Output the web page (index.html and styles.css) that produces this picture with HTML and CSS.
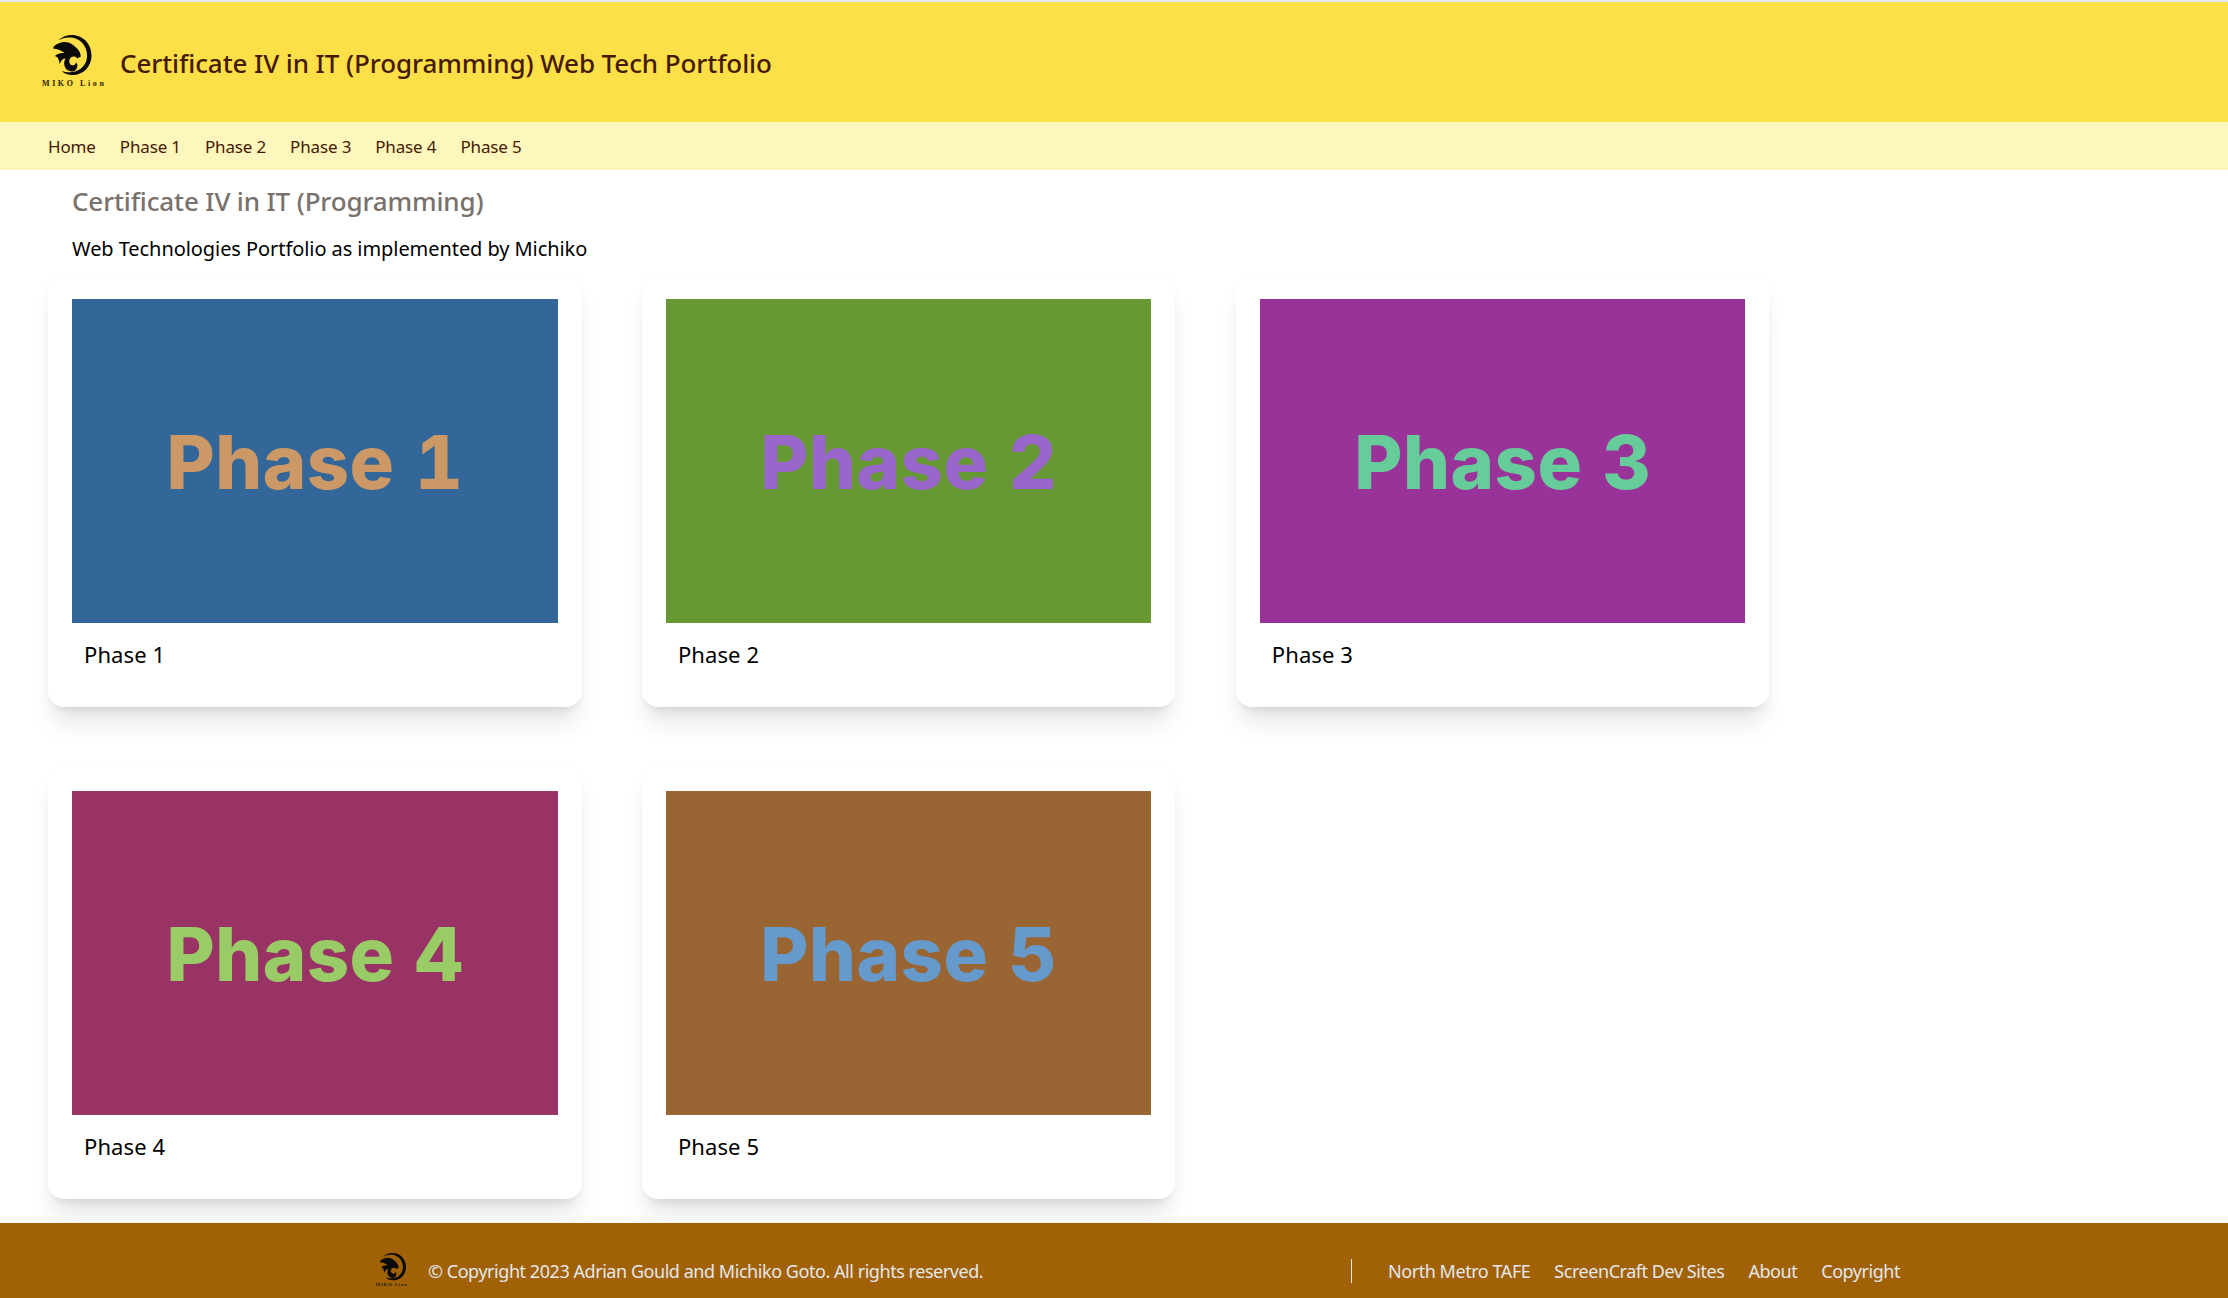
FILE: index.html
```html
<!DOCTYPE html>
<html lang="en">
<head>
<meta charset="utf-8">
<title>Certificate IV in IT (Programming) Web Tech Portfolio</title>
<link rel="stylesheet" href="styles.css">
</head>
<body>
<header class="site-header">
  <div class="logo">
    <svg class="logo-mark" viewBox="0 0 42 42" aria-hidden="true">
      <path fill="#0a0a0a" d="M8 5.5C12 1.5 17 0 22 0C33 0 42 9 42 21C42 33 33 41 23 41C17.5 41 14 39.5 11.5 36.5C14.5 38 18 38.5 22 38C31 37 37.500 30 37.500 21C37.500 11 30 3 21 2.500C16 2.200 11.500 3.300 8 5.500Z"/>
      <path fill="#0a0a0a" d="M3 12C9 6.500 17 6 22 9.500C27 13 31 17 31 22L27.500 24C25 21 21 21.500 19.500 25C18.500 28.500 20.500 31 23 31C25 31 26.200 29.500 26 28C28.500 30 28 34.500 24.500 37C19 38.500 14 35 14 29C14 27 14.500 25.500 15.500 24C12.500 24 10.500 26 9.500 30C8.500 25 8 22.500 4.500 21.500C7 19 10.500 18 14.500 18.500C11 15.500 6.500 14 3 14Z"/>
    </svg>
    <span class="logo-text">MIKO Lion</span>
  </div>
  <h1 class="site-title">Certificate IV in IT (Programming) Web Tech Portfolio</h1>
</header>
<nav class="sub-nav">
  <a href="#">Home</a><a href="#">Phase 1</a><a href="#">Phase 2</a><a href="#">Phase 3</a><a href="#">Phase 4</a><a href="#">Phase 5</a>
</nav>
<main class="content">
  <div class="intro">
    <h2 class="intro-title">Certificate IV in IT (Programming)</h2>
    <p class="intro-text">Web Technologies Portfolio as implemented by Michiko</p>
  </div>
  <section class="card-grid">
    <article class="card"><div class="thumb thumb-1">Phase 1</div><p class="card-label">Phase 1</p></article>
    <article class="card"><div class="thumb thumb-2">Phase 2</div><p class="card-label">Phase 2</p></article>
    <article class="card"><div class="thumb thumb-3">Phase 3</div><p class="card-label">Phase 3</p></article>
    <article class="card"><div class="thumb thumb-4">Phase 4</div><p class="card-label">Phase 4</p></article>
    <article class="card"><div class="thumb thumb-5">Phase 5</div><p class="card-label">Phase 5</p></article>
  </section>
</main>
<footer class="site-footer">
  <div class="footer-left">
    <div class="footer-logo">
      <svg class="footer-mark" viewBox="0 0 42 42" aria-hidden="true">
        <path fill="#0a0a0a" d="M8 5.5C12 1.5 17 0 22 0C33 0 42 9 42 21C42 33 33 41 23 41C17.5 41 14 39.5 11.5 36.5C14.5 38 18 38.5 22 38C31 37 37.500 30 37.500 21C37.500 11 30 3 21 2.500C16 2.200 11.500 3.300 8 5.500Z"/>
        <path fill="#0a0a0a" d="M3 12C9 6.500 17 6 22 9.500C27 13 31 17 31 22L27.500 24C25 21 21 21.500 19.500 25C18.500 28.500 20.500 31 23 31C25 31 26.200 29.500 26 28C28.500 30 28 34.500 24.500 37C19 38.500 14 35 14 29C14 27 14.500 25.500 15.500 24C12.500 24 10.500 26 9.500 30C8.500 25 8 22.500 4.500 21.500C7 19 10.500 18 14.500 18.500C11 15.500 6.500 14 3 14Z"/>
      </svg>
      <span class="footer-logo-text">MIKO Lion</span>
    </div>
    <p class="copyright">© Copyright 2023 Adrian Gould and Michiko Goto. All rights reserved.</p>
  </div>
  <nav class="footer-nav">
    <a href="#">North Metro TAFE</a><a href="#">ScreenCraft Dev Sites</a><a href="#">About</a><a href="#">Copyright</a>
  </nav>
</footer>
</body>
</html>
```
FILE: styles.css
```css
* { box-sizing: border-box; }
html, body { margin: 0; padding: 0; }
body {
  height: 1298px;
  overflow: hidden;
  background: #fff;
  color: #000;
  font-family: "Noto Sans", "Open Sans", sans-serif;
  border-top: 2px solid #e5e7eb;
}
a { color: inherit; text-decoration: none; }
h1, h2, p { margin: 0; }

.site-header {
  height: 120px;
  background: #fde047;
  display: flex;
  align-items: center;
  padding-left: 42px;
  gap: 16px;
}
.logo { width: 62px; display: flex; flex-direction: column; align-items: flex-start; margin-bottom: 1px; }
.logo-mark { width: 42px; height: 41px; display: block; margin-left: 8px; }
.logo-text { font: 700 8px/9px "Liberation Serif", serif; letter-spacing: 2.6px; color: #2a2208; margin-top: 3px; white-space: nowrap; }
.site-title { font-size: 26px; font-weight: 500; color: #451a03; line-height: 36px; letter-spacing: -0.08px; padding-top: 1px; }

.sub-nav {
  height: 48px;
  background: #fef7bd;
  display: flex;
  align-items: center;
  gap: 24px;
  padding-left: 48px;
  font-size: 17px;
  color: #451a03;
  letter-spacing: -0.15px;
}

.content { padding: 0 48px; height: 1053px; }
.intro { padding-left: 24px; }
.intro-title { font-size: 26px; font-weight: 500; line-height: 36px; padding-top: 13px; color: #78716c; letter-spacing: -0.14px; }
.intro-text { font-size: 20px; line-height: 28px; margin-top: 16px; letter-spacing: -0.07px; }

.card-grid {
  display: grid;
  grid-template-columns: repeat(3, 533.6px);
  grid-auto-rows: 432px;
  column-gap: 60.3px;
  row-gap: 60px;
  margin-top: 12px;
}
.card {
  background: #fff;
  border-radius: 16px;
  padding: 24px 24px 0;
  box-shadow: 0 20px 25px -5px rgba(0,0,0,.1), 0 8px 10px -6px rgba(0,0,0,.1), 0 0 12px rgba(0,0,0,.015);
}
.thumb {
  height: 324px;
  display: flex;
  align-items: center;
  justify-content: center;
  padding-top: 2px;
  font-family: "Inter", sans-serif;
  font-weight: 800;
  font-size: 74px;
  letter-spacing: 0.5px;
  font-variant-numeric: tabular-nums;
}
.thumb-1 { background: #336699; color: #cc9966; }
.thumb-2 { background: #669933; color: #9966cc; }
.thumb-3 { background: #993399; color: #66cc99; }
.thumb-4 { background: #993366; color: #99cc66; }
.thumb-5 { background: #996633; color: #6699cc; }
.card-label { font-size: 22px; line-height: 28px; padding: 17px 12px 0; letter-spacing: 0.1px; }

.site-footer {
  height: 75px;
  background: #a16207;
  color: #e5e7eb;
  display: flex;
  align-items: center;
  font-size: 18px;
  padding: 20px 0 0 370px;
  letter-spacing: -0.45px;
}
.footer-left { display: flex; align-items: center; gap: 15px; width: 981px; }
.footer-logo { width: 43px; display: flex; flex-direction: column; align-items: center; }
.footer-mark { width: 28px; height: 28px; display: block; }
.footer-logo-text { font: 700 5px/6px "Liberation Serif", serif; letter-spacing: 0.7px; color: #2a2208; white-space: nowrap; margin-top: 1px; }
.footer-nav {
  display: flex;
  gap: 24px;
  padding-left: 36px;
  border-left: 1px solid #e5e7eb;
  line-height: 24px;
}
```
